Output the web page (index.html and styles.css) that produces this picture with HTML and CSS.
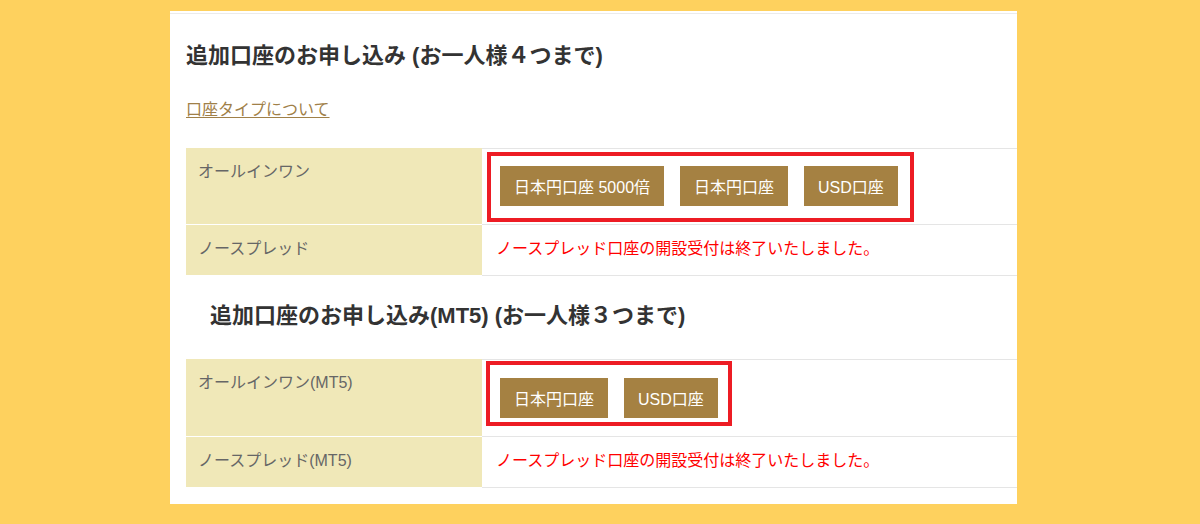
FILE: index.html
```html
<!DOCTYPE html>
<html lang="ja">
<head>
<meta charset="utf-8">
<title>追加口座のお申し込み</title>
<link rel="stylesheet" href="styles.css">
</head>
<body>
<div class="panel">
  <div class="inner">
    <h2 class="title">追加口座のお申し込み (お一人様４つまで)</h2>
    <a class="type-link" href="#">口座タイプについて</a>
    <div class="grid grid-first">
      <div class="label label-top">オールインワン</div>
      <div class="value value-top value-a">
        <div class="redbox redbox-a">
          <a class="btn" href="#">日本円口座 5000倍</a>
          <a class="btn" href="#">日本円口座</a>
          <a class="btn" href="#">USD口座</a>
        </div>
      </div>
      <div class="label">ノースプレッド</div>
      <div class="value value-text">ノースプレッド口座の開設受付は終了いたしました。</div>
    </div>
    <h2 class="title title-mt5">追加口座のお申し込み(MT5) (お一人様３つまで)</h2>
    <div class="grid grid-second">
      <div class="label label-top">オールインワン(MT5)</div>
      <div class="value value-top value-b">
        <div class="redbox redbox-b">
          <a class="btn" href="#">日本円口座</a>
          <a class="btn" href="#">USD口座</a>
        </div>
      </div>
      <div class="label">ノースプレッド(MT5)</div>
      <div class="value value-text">ノースプレッド口座の開設受付は終了いたしました。</div>
    </div>
  </div>
</div>
</body>
</html>
```

FILE: styles.css
```css
html, body {
  margin: 0;
  padding: 0;
}
body {
  background: #fed15e;
  font-family: "Liberation Sans", "Noto Sans CJK JP", sans-serif;
  height: 524px;
  overflow: hidden;
}
.panel {
  margin: 11px 0 0 170px;
  width: 847px;
  background: #fff;
  padding-top: 2px;
  padding-bottom: 16px;
}
.inner {
  border-top: 1px solid #ebebeb;
  padding-left: 16px;
  display: flex;
  flex-direction: column;
  align-items: flex-start;
}
.title {
  margin: 27px 0 0 0;
  font-size: 22px;
  line-height: 30px;
  font-weight: bold;
  color: #333;
}
.title-mt5 {
  margin: 25px 0 0 24px;
}
.type-link {
  margin-top: 27px;
  font-size: 16px;
  line-height: 24px;
  color: #a08048;
  text-decoration: underline;
  text-underline-offset: 2px;
}
.grid {
  display: grid;
  grid-template-columns: 296px 1fr;
  width: 100%;
  margin-top: 26px;
}
.grid-second {
  margin-top: 28px;
}
.label {
  background: #f0e8b8;
  color: #666;
  font-size: 16px;
  line-height: 24px;
  padding: 12px 12px 0 12px;
  border-bottom: 1px solid #fff;
}
.label-top {
  padding-top: 12px;
}
.value {
  border-bottom: 1px solid #e5e5e5;
  padding-left: 5px;
}
.value-top {
  border-top: 1px solid #e5e5e5;
}
.value-a {
  padding-top: 3px;
  padding-bottom: 2px;
}
.value-b {
  padding-top: 1px;
  padding-bottom: 10px;
  padding-left: 4px;
}
.value-text {
  color: #f00;
  font-size: 16px;
  line-height: 24px;
  padding: 12px 0 14px 14px;
}
.redbox {
  display: inline-flex;
  gap: 16px;
  border: 4px solid #ed1c24;
  padding: 10px 12px 12px 9px;
}
.redbox-b {
  padding: 13px 10px 4px 10px;
}
.btn {
  display: flex;
  align-items: center;
  height: 40px;
  padding: 0 14px;
  background: #a58142;
  color: #fff;
  font-size: 16px;
  text-decoration: none;
  white-space: nowrap;
}
```
